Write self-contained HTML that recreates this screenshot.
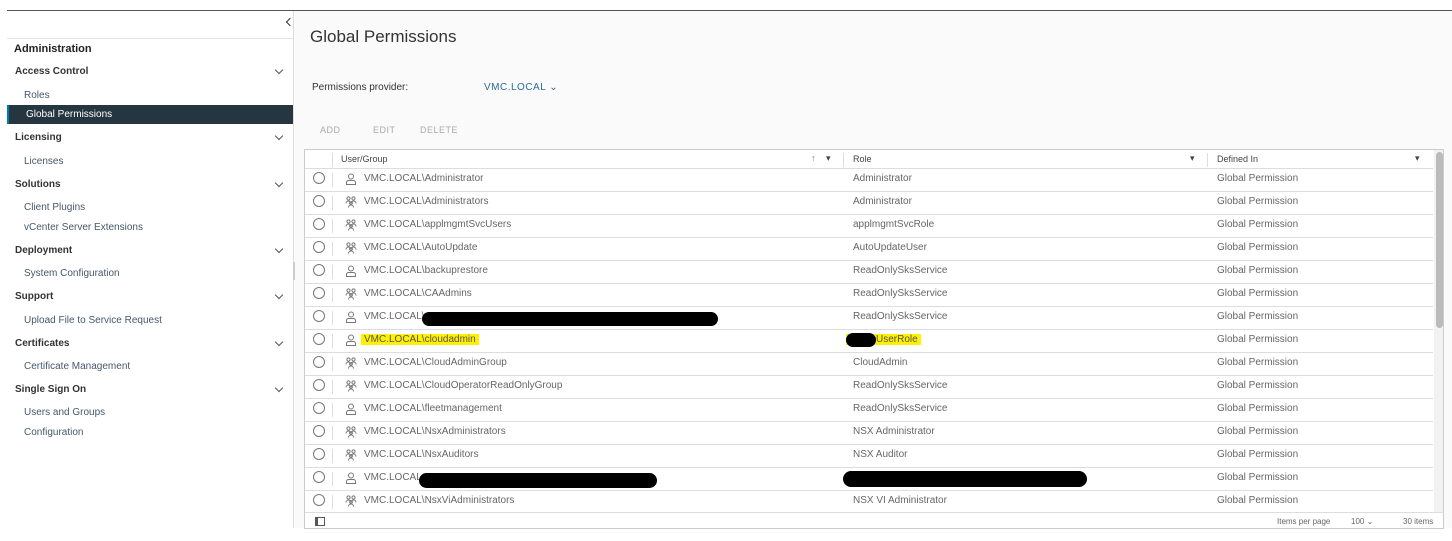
<!DOCTYPE html>
<html><head><meta charset="utf-8"><style>
*{box-sizing:border-box;margin:0;padding:0}
body{width:1452px;height:541px;background:#fff;font-family:"Liberation Sans",sans-serif;position:relative;overflow:hidden;color:#333}
.abs{position:absolute}
.topline{left:7px;top:10px;width:1445px;height:1px;background:#555}
.side{left:7px;top:11px;width:287px;height:517px;background:#fff;border-right:1px solid #ddd}
.sh{position:absolute;left:8px;font-size:10px;font-weight:bold;color:#333}
.si{position:absolute;left:17px;font-size:10px;color:#45586a}
.chev{position:absolute;left:269px;width:6px;height:6px;border-right:1px solid #555;border-bottom:1px solid #555;transform:rotate(45deg)}
.main{left:295px;top:11px;width:1157px;height:517px;background:#fafafa}
.tbl{left:304px;top:149px;width:1140px;height:380px;background:#fff;border:1px solid #ccc;overflow:hidden}
.row{position:absolute;left:0;width:1128px;height:23px;border-bottom:1px solid #ddd;font-size:10px;color:#666}
.row span{position:absolute;top:4px}
.radio{position:absolute;left:8px;top:3px;width:12px;height:12px;border:1px solid #777;border-radius:50%}
.sep{position:absolute;left:27px;top:4px;width:1px;height:14px;background:#ddd}
.ic{position:absolute;left:40px;top:4px}
.blk{position:absolute;background:#000;border-radius:8px}
.hl{background:#ffef00;color:#555}
</style></head><body>
<div class="abs topline"></div>
<div class="abs side">
<div style="position:absolute;left:280px;top:8px;width:6px;height:6px;border-left:1.5px solid #333;border-bottom:1.5px solid #333;transform:rotate(45deg)"></div>
<div style="position:absolute;left:0;top:27px;width:286px;height:1px;background:#e4e4e4"></div>
<div class="sh" style="left:7px;top:32px;font-size:11px;color:#222">Administration</div>
<div class="sh" style="top:55px">Access Control</div><div class="chev" style="top:56px"></div>
<div class="si" style="top:79px">Roles</div>
<div style="position:absolute;left:0;top:94px;width:286px;height:19px;background:#253640;border-left:2px solid #0079b8"></div>
<div class="si" style="top:98px;left:19px;color:#fff">Global Permissions</div>
<div class="sh" style="top:121px">Licensing</div><div class="chev" style="top:122px"></div>
<div class="si" style="top:145px">Licenses</div>
<div class="sh" style="top:168px">Solutions</div><div class="chev" style="top:169px"></div>
<div class="si" style="top:191px">Client Plugins</div>
<div class="si" style="top:211px">vCenter Server Extensions</div>
<div class="sh" style="top:234px">Deployment</div><div class="chev" style="top:235px"></div>
<div class="si" style="top:257px">System Configuration</div>
<div class="sh" style="top:280px">Support</div><div class="chev" style="top:281px"></div>
<div class="si" style="top:304px">Upload File to Service Request</div>
<div class="sh" style="top:327px">Certificates</div><div class="chev" style="top:328px"></div>
<div class="si" style="top:350px">Certificate Management</div>
<div class="sh" style="top:373px">Single Sign On</div><div class="chev" style="top:374px"></div>
<div class="si" style="top:396px">Users and Groups</div>
<div class="si" style="top:416px">Configuration</div>
<div style="position:absolute;left:286px;top:251px;width:2px;height:18px;background:#ccc"></div>
</div>
<div class="abs main">
<div style="position:absolute;left:15px;top:16px;font-size:17px;color:#333">Global Permissions</div>
<div style="position:absolute;left:17px;top:71px;font-size:10px;color:#333">Permissions provider:</div>
<div style="position:absolute;left:189px;top:71px;font-size:10px;color:#2a6d9a;letter-spacing:0.5px">VMC.LOCAL ⌄</div>
<div style="position:absolute;left:25px;top:114px;font-size:9px;color:#aaa;letter-spacing:0.5px">ADD</div>
<div style="position:absolute;left:78px;top:114px;font-size:9px;color:#aaa;letter-spacing:0.5px">EDIT</div>
<div style="position:absolute;left:125px;top:114px;font-size:9px;color:#aaa;letter-spacing:0.5px">DELETE</div>
</div>
<div class="abs tbl">
<div style="position:absolute;left:0;top:0;width:1128px;height:19px;border-bottom:1px solid #ddd;font-size:9px;color:#444">
<div class="sep" style="top:3px"></div>
<span style="position:absolute;left:36px;top:4px">User/Group</span>
<span style="position:absolute;left:506px;top:3px;color:#777">↑</span>
<span style="position:absolute;left:521px;top:3px">▾</span>
<div class="sep" style="left:538px;top:3px"></div>
<span style="position:absolute;left:548px;top:4px">Role</span>
<span style="position:absolute;left:885px;top:3px">▾</span>
<div class="sep" style="left:902px;top:3px"></div>
<span style="position:absolute;left:912px;top:4px">Defined In</span>
<span style="position:absolute;left:1110px;top:3px">▾</span>
</div>
<div style="position:absolute;left:1129px;top:0;width:11px;height:362px;background:#f2f2f2"></div>
<div style="position:absolute;left:1131px;top:2px;width:7px;height:176px;background:#bbb;border-radius:4px"></div>

<div class="row" style="top:19px"><div class="radio"></div><div class="sep"></div><svg class="ic" width="12" height="12" viewBox="0 0 12 12" fill="none" stroke="#777"><circle cx="6" cy="3.5" r="2.5"/><path d="M1.5 11.5v-2a2 2 0 0 1 2-2h5a2 2 0 0 1 2 2v2z"/></svg><span style="left:59px">VMC.LOCAL\Administrator</span><span style="left:548px">Administrator</span><span style="left:912px">Global Permission</span></div>
<div class="row" style="top:42px"><div class="radio"></div><div class="sep"></div><svg class="ic" width="12" height="12" viewBox="0 0 12 12" fill="none" stroke="#777"><circle cx="3.5" cy="2.5" r="1.6"/><circle cx="8.5" cy="2.5" r="1.6"/><path d="M1 7.5a2.5 2.5 0 0 1 5 0M6 7.5a2.5 2.5 0 0 1 5 0"/><circle cx="6" cy="7" r="1.4"/><path d="M3.5 11.5a2.5 2.5 0 0 1 5 0"/></svg><span style="left:59px">VMC.LOCAL\Administrators</span><span style="left:548px">Administrator</span><span style="left:912px">Global Permission</span></div>
<div class="row" style="top:65px"><div class="radio"></div><div class="sep"></div><svg class="ic" width="12" height="12" viewBox="0 0 12 12" fill="none" stroke="#777"><circle cx="3.5" cy="2.5" r="1.6"/><circle cx="8.5" cy="2.5" r="1.6"/><path d="M1 7.5a2.5 2.5 0 0 1 5 0M6 7.5a2.5 2.5 0 0 1 5 0"/><circle cx="6" cy="7" r="1.4"/><path d="M3.5 11.5a2.5 2.5 0 0 1 5 0"/></svg><span style="left:59px">VMC.LOCAL\applmgmtSvcUsers</span><span style="left:548px">applmgmtSvcRole</span><span style="left:912px">Global Permission</span></div>
<div class="row" style="top:88px"><div class="radio"></div><div class="sep"></div><svg class="ic" width="12" height="12" viewBox="0 0 12 12" fill="none" stroke="#777"><circle cx="3.5" cy="2.5" r="1.6"/><circle cx="8.5" cy="2.5" r="1.6"/><path d="M1 7.5a2.5 2.5 0 0 1 5 0M6 7.5a2.5 2.5 0 0 1 5 0"/><circle cx="6" cy="7" r="1.4"/><path d="M3.5 11.5a2.5 2.5 0 0 1 5 0"/></svg><span style="left:59px">VMC.LOCAL\AutoUpdate</span><span style="left:548px">AutoUpdateUser</span><span style="left:912px">Global Permission</span></div>
<div class="row" style="top:111px"><div class="radio"></div><div class="sep"></div><svg class="ic" width="12" height="12" viewBox="0 0 12 12" fill="none" stroke="#777"><circle cx="6" cy="3.5" r="2.5"/><path d="M1.5 11.5v-2a2 2 0 0 1 2-2h5a2 2 0 0 1 2 2v2z"/></svg><span style="left:59px">VMC.LOCAL\backuprestore</span><span style="left:548px">ReadOnlySksService</span><span style="left:912px">Global Permission</span></div>
<div class="row" style="top:134px"><div class="radio"></div><div class="sep"></div><svg class="ic" width="12" height="12" viewBox="0 0 12 12" fill="none" stroke="#777"><circle cx="3.5" cy="2.5" r="1.6"/><circle cx="8.5" cy="2.5" r="1.6"/><path d="M1 7.5a2.5 2.5 0 0 1 5 0M6 7.5a2.5 2.5 0 0 1 5 0"/><circle cx="6" cy="7" r="1.4"/><path d="M3.5 11.5a2.5 2.5 0 0 1 5 0"/></svg><span style="left:59px">VMC.LOCAL\CAAdmins</span><span style="left:548px">ReadOnlySksService</span><span style="left:912px">Global Permission</span></div>
<div class="row" style="top:157px"><div class="radio"></div><div class="sep"></div><svg class="ic" width="12" height="12" viewBox="0 0 12 12" fill="none" stroke="#777"><circle cx="6" cy="3.5" r="2.5"/><path d="M1.5 11.5v-2a2 2 0 0 1 2-2h5a2 2 0 0 1 2 2v2z"/></svg><span style="left:59px">VMC.LOCAL\</span><div class="blk" style="left:117px;top:5px;width:296px;height:14px;border-radius:7px"></div><span style="left:548px">ReadOnlySksService</span><span style="left:912px">Global Permission</span></div>
<div class="row" style="top:180px"><div class="radio"></div><div class="sep"></div><svg class="ic" width="12" height="12" viewBox="0 0 12 12" fill="none" stroke="#777"><circle cx="6" cy="3.5" r="2.5"/><path d="M1.5 11.5v-2a2 2 0 0 1 2-2h5a2 2 0 0 1 2 2v2z"/></svg><span class="hl" style="left:56px;padding:0 3px">VMC.LOCAL\cloudadmin</span><span class="hl" style="left:541px;padding:0 3px 0 30px">UserRole</span><div class="blk" style="left:541px;top:3px;width:30px;height:14px"></div><span style="left:912px">Global Permission</span></div>
<div class="row" style="top:203px"><div class="radio"></div><div class="sep"></div><svg class="ic" width="12" height="12" viewBox="0 0 12 12" fill="none" stroke="#777"><circle cx="3.5" cy="2.5" r="1.6"/><circle cx="8.5" cy="2.5" r="1.6"/><path d="M1 7.5a2.5 2.5 0 0 1 5 0M6 7.5a2.5 2.5 0 0 1 5 0"/><circle cx="6" cy="7" r="1.4"/><path d="M3.5 11.5a2.5 2.5 0 0 1 5 0"/></svg><span style="left:59px">VMC.LOCAL\CloudAdminGroup</span><span style="left:548px">CloudAdmin</span><span style="left:912px">Global Permission</span></div>
<div class="row" style="top:226px"><div class="radio"></div><div class="sep"></div><svg class="ic" width="12" height="12" viewBox="0 0 12 12" fill="none" stroke="#777"><circle cx="3.5" cy="2.5" r="1.6"/><circle cx="8.5" cy="2.5" r="1.6"/><path d="M1 7.5a2.5 2.5 0 0 1 5 0M6 7.5a2.5 2.5 0 0 1 5 0"/><circle cx="6" cy="7" r="1.4"/><path d="M3.5 11.5a2.5 2.5 0 0 1 5 0"/></svg><span style="left:59px">VMC.LOCAL\CloudOperatorReadOnlyGroup</span><span style="left:548px">ReadOnlySksService</span><span style="left:912px">Global Permission</span></div>
<div class="row" style="top:249px"><div class="radio"></div><div class="sep"></div><svg class="ic" width="12" height="12" viewBox="0 0 12 12" fill="none" stroke="#777"><circle cx="6" cy="3.5" r="2.5"/><path d="M1.5 11.5v-2a2 2 0 0 1 2-2h5a2 2 0 0 1 2 2v2z"/></svg><span style="left:59px">VMC.LOCAL\fleetmanagement</span><span style="left:548px">ReadOnlySksService</span><span style="left:912px">Global Permission</span></div>
<div class="row" style="top:272px"><div class="radio"></div><div class="sep"></div><svg class="ic" width="12" height="12" viewBox="0 0 12 12" fill="none" stroke="#777"><circle cx="3.5" cy="2.5" r="1.6"/><circle cx="8.5" cy="2.5" r="1.6"/><path d="M1 7.5a2.5 2.5 0 0 1 5 0M6 7.5a2.5 2.5 0 0 1 5 0"/><circle cx="6" cy="7" r="1.4"/><path d="M3.5 11.5a2.5 2.5 0 0 1 5 0"/></svg><span style="left:59px">VMC.LOCAL\NsxAdministrators</span><span style="left:548px">NSX Administrator</span><span style="left:912px">Global Permission</span></div>
<div class="row" style="top:295px"><div class="radio"></div><div class="sep"></div><svg class="ic" width="12" height="12" viewBox="0 0 12 12" fill="none" stroke="#777"><circle cx="3.5" cy="2.5" r="1.6"/><circle cx="8.5" cy="2.5" r="1.6"/><path d="M1 7.5a2.5 2.5 0 0 1 5 0M6 7.5a2.5 2.5 0 0 1 5 0"/><circle cx="6" cy="7" r="1.4"/><path d="M3.5 11.5a2.5 2.5 0 0 1 5 0"/></svg><span style="left:59px">VMC.LOCAL\NsxAuditors</span><span style="left:548px">NSX Auditor</span><span style="left:912px">Global Permission</span></div>
<div class="row" style="top:318px"><div class="radio"></div><div class="sep"></div><svg class="ic" width="12" height="12" viewBox="0 0 12 12" fill="none" stroke="#777"><circle cx="6" cy="3.5" r="2.5"/><path d="M1.5 11.5v-2a2 2 0 0 1 2-2h5a2 2 0 0 1 2 2v2z"/></svg><span style="left:59px">VMC.LOCAL</span><div class="blk" style="left:114px;top:5px;width:238px;height:15px"></div><div class="blk" style="left:538px;top:3px;width:244px;height:16px"></div><span style="left:912px">Global Permission</span></div>
<div class="row" style="top:341px;border-bottom:none"><div class="radio"></div><div class="sep"></div><svg class="ic" width="12" height="12" viewBox="0 0 12 12" fill="none" stroke="#777"><circle cx="3.5" cy="2.5" r="1.6"/><circle cx="8.5" cy="2.5" r="1.6"/><path d="M1 7.5a2.5 2.5 0 0 1 5 0M6 7.5a2.5 2.5 0 0 1 5 0"/><circle cx="6" cy="7" r="1.4"/><path d="M3.5 11.5a2.5 2.5 0 0 1 5 0"/></svg><span style="left:59px">VMC.LOCAL\NsxViAdministrators</span><span style="left:548px">NSX VI Administrator</span><span style="left:912px">Global Permission</span></div>

<div style="position:absolute;left:0;top:362px;width:1140px;height:18px;background:#fff;border-top:1px solid #ddd;font-size:8px;color:#666">
<div style="position:absolute;left:10px;top:4px;width:10px;height:9px;border:1px solid #555;border-left-width:3px"></div>
<span style="position:absolute;left:972px;top:4px">Items per page</span>
<span style="position:absolute;left:1046px;top:4px">100 ⌄</span>
<div style="position:absolute;left:1047px;top:15px;width:36px;height:1px;background:#666"></div>
<span style="position:absolute;left:1098px;top:4px">30 items</span>
</div>
</div>
</body></html>
